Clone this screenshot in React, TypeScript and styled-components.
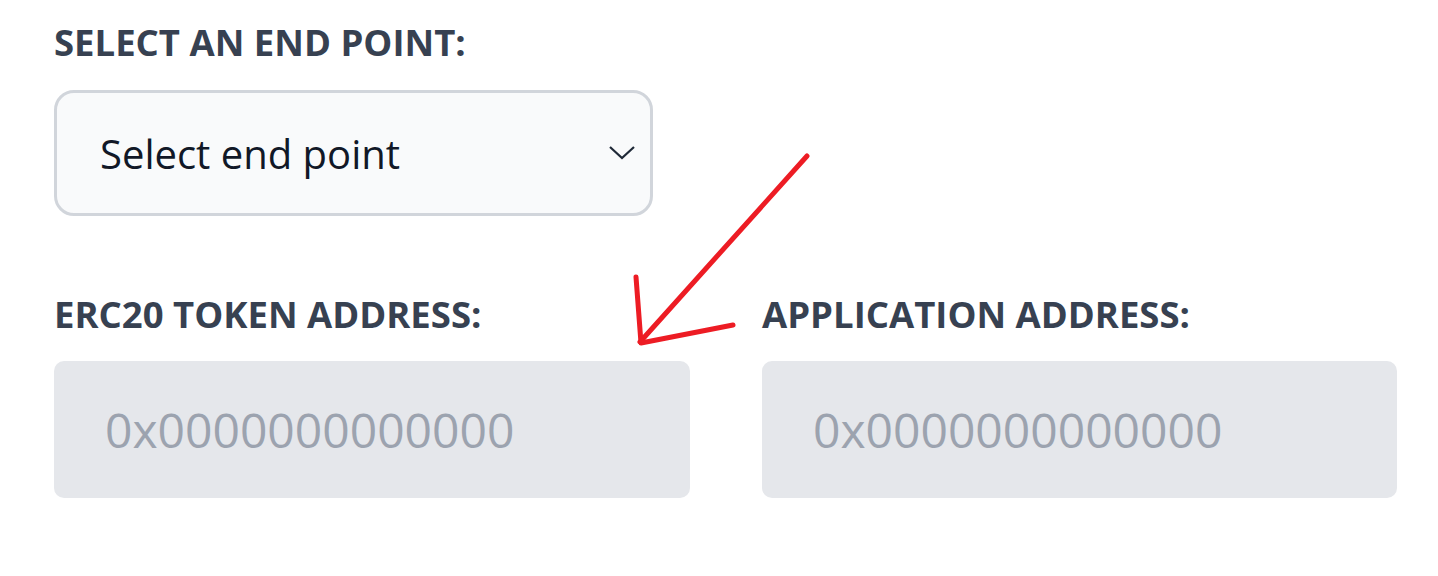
import React from 'react';
import styled, { createGlobalStyle } from 'styled-components';

const GlobalStyle = createGlobalStyle`
  body {
    margin: 0;
    background: #ffffff;
    font-family: 'Open Sans', 'Noto Sans', sans-serif;
  }
`;

const Page = styled.div`
  position: relative;
  width: 1438px;
  height: 576px;
  overflow: hidden;
  padding: 18px 41px 0 54px;
  box-sizing: border-box;
`;

const Field = styled.div`
  display: flex;
  flex-direction: column;
`;

const Label = styled.label`
  font-size: 36.5px;
  font-weight: 700;
  line-height: 48px;
  letter-spacing: 0;
  color: #374151;
  text-transform: uppercase;
  margin-bottom: ${(p: { $gap: number }) => p.$gap}px;
`;

const SelectBox = styled.div`
  width: 599px;
  height: 126px;
  box-sizing: border-box;
  border: 3px solid #d1d5db;
  border-radius: 20px;
  background: #f9fafb;
  display: flex;
  align-items: center;
  justify-content: space-between;
  padding: 0 14px 0 43px;
  color: #111827;
  font-size: 40px;
`;

const Grid = styled.div`
  display: grid;
  grid-template-columns: 636px 635px;
  column-gap: 72px;
  margin-top: 74px;
`;

const AddressInput = styled.div`
  height: 137px;
  box-sizing: border-box;
  border-radius: 10px;
  background: #e5e7eb;
  display: flex;
  align-items: center;
  padding-left: 51px;
  font-size: 48px;
  color: #9ca3af;
`;

const Arrow = styled.svg`
  position: absolute;
  left: 0;
  top: 0;
  pointer-events: none;
`;

const Chevron = () => (
  <svg width="28" height="16" viewBox="0 0 28 16" fill="none">
    <path d="M2 2 L14 13 L26 2" stroke="#1f2937" strokeWidth="2.2" />
  </svg>
);

export default function App() {
  return (
    <>
      <GlobalStyle />
      <Page>
        <Field>
          <Label $gap={24}>Select an end point:</Label>
          <SelectBox>
            <span>Select end point</span>
            <Chevron />
          </SelectBox>
        </Field>
        <Grid>
          <Field>
            <Label $gap={23}>ERC20 Token Address:</Label>
            <AddressInput>0x0000000000000</AddressInput>
          </Field>
          <Field>
            <Label $gap={23}>Application Address:</Label>
            <AddressInput>0x0000000000000</AddressInput>
          </Field>
        </Grid>
        <Arrow width="1438" height="576">
          <g stroke="#ed1c24" strokeWidth="5" strokeLinecap="round" fill="none">
            <path d="M807 156 L640 342" />
            <path d="M636 277 L641 343 L733 325" strokeLinejoin="round" />
          </g>
        </Arrow>
      </Page>
    </>
  );
}
